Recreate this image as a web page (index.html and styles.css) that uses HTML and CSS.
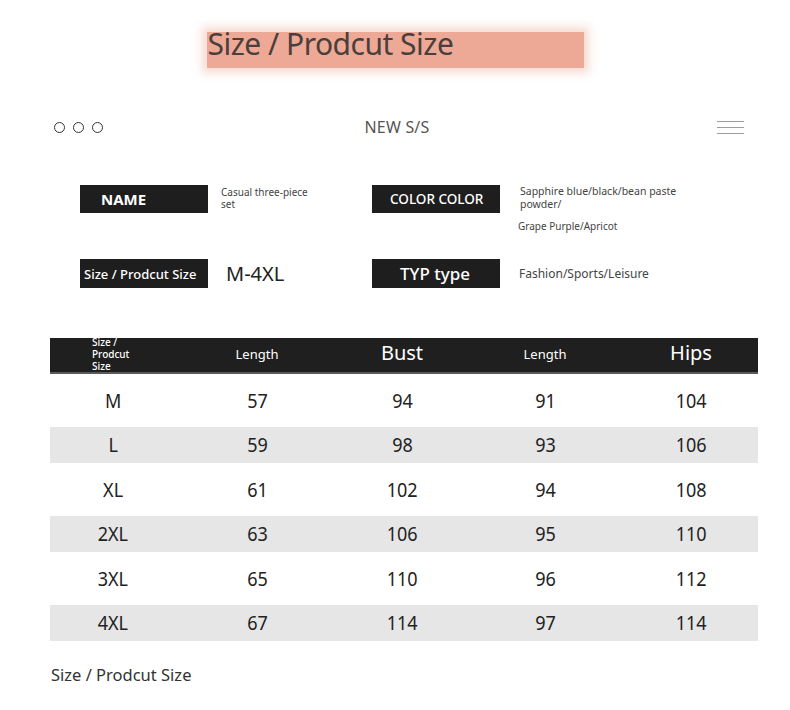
FILE: index.html
```html
<!DOCTYPE html>
<html lang="en">
<head>
<meta charset="utf-8">
<title>Size / Prodcut Size</title>
<link rel="stylesheet" href="styles.css">
</head>
<body>
<div class="page">
  <div class="title-wrap">
    <div class="title-band"><span class="title-text">Size / Prodcut Size</span></div>
  </div>

  <div class="topbar">
    <div class="dots"><span class="dot"></span><span class="dot"></span><span class="dot"></span></div>
    <div class="brand">NEW S/S</div>
    <div class="menu"><span></span><span></span><span></span></div>
  </div>

  <div class="info">
    <div class="info-row row-a">
      <div class="item item-left">
        <div class="label label-name">NAME</div>
        <div class="value value-small"><p>Casual three-piece</p><p>set</p></div>
      </div>
      <div class="item item-right">
        <div class="label label-color">COLOR COLOR</div>
        <div class="value value-color">
          <p>Sapphire blue/black/bean paste</p>
          <p>powder/</p>
          <p class="grape">Grape Purple/Apricot</p>
        </div>
      </div>
    </div>
    <div class="info-row row-b">
      <div class="item item-left">
        <div class="label label-size">Size / Prodcut Size</div>
        <div class="value value-big">M-4XL</div>
      </div>
      <div class="item item-right">
        <div class="label label-typ">TYP type</div>
        <div class="value value-type">Fashion/Sports/Leisure</div>
      </div>
    </div>
  </div>

  <div class="table">
    <div class="trow thead">
      <div class="cell cell-first"><span class="tiny">Size /<br>Prodcut<br>Size</span></div>
      <div class="cell"><span class="h-sm">Length</span></div>
      <div class="cell"><span class="h-lg">Bust</span></div>
      <div class="cell"><span class="h-sm">Length</span></div>
      <div class="cell"><span class="h-lg">Hips</span></div>
    </div>
    <div class="trow"><div class="cell"><span>M</span></div><div class="cell"><span>57</span></div><div class="cell"><span>94</span></div><div class="cell"><span>91</span></div><div class="cell"><span>104</span></div></div>
    <div class="trow alt"><div class="cell"><span>L</span></div><div class="cell"><span>59</span></div><div class="cell"><span>98</span></div><div class="cell"><span>93</span></div><div class="cell"><span>106</span></div></div>
    <div class="trow"><div class="cell"><span>XL</span></div><div class="cell"><span>61</span></div><div class="cell"><span>102</span></div><div class="cell"><span>94</span></div><div class="cell"><span>108</span></div></div>
    <div class="trow alt"><div class="cell"><span>2XL</span></div><div class="cell"><span>63</span></div><div class="cell"><span>106</span></div><div class="cell"><span>95</span></div><div class="cell"><span>110</span></div></div>
    <div class="trow"><div class="cell"><span>3XL</span></div><div class="cell"><span>65</span></div><div class="cell"><span>110</span></div><div class="cell"><span>96</span></div><div class="cell"><span>112</span></div></div>
    <div class="trow alt"><div class="cell"><span>4XL</span></div><div class="cell"><span>67</span></div><div class="cell"><span>114</span></div><div class="cell"><span>97</span></div><div class="cell"><span>114</span></div></div>
  </div>

  <div class="caption">Size / Prodcut Size</div>
</div>
</body>
</html>
```

FILE: styles.css
```css
* { box-sizing: border-box; }
html, body { margin: 0; padding: 0; background: #ffffff; }
body {
  font-family: "Noto Sans", "Open Sans", "DejaVu Sans", sans-serif;
  color: #333;
  width: 790px;
  height: 710px;
  overflow: hidden;
}
.page { padding-top: 32px; }

/* Title */
.title-wrap { display: flex; justify-content: center; }
.title-band {
  width: 377px;
  height: 36px;
  background: #eda995;
  box-shadow: 0 0 8px 5px rgba(240, 185, 168, 0.5);
  padding-left: 1px;
}
.title-text {
  display: block;
  font-size: 30px;
  line-height: 24px;
  letter-spacing: -0.5px;
  color: #4a3f3c;
  white-space: nowrap;
}

/* Top bar */
.topbar {
  margin-top: 47px;
  height: 24px;
  display: grid;
  grid-template-columns: 1fr auto 1fr;
  align-items: center;
  padding: 0 46px 0 54px;
}
.dots { display: flex; gap: 8px; }
.dot {
  width: 11px; height: 11px;
  border: 1.3px solid #333;
  border-radius: 50%;
}
.brand {
  font-size: 16px;
  letter-spacing: 0.2px;
  color: #555;
  line-height: 24px;
  margin-left: -4px;
}
.menu {
  justify-self: end;
  width: 27px;
  display: flex;
  flex-direction: column;
  gap: 5px;
}
.menu span { display: block; height: 1px; background: #a8979f; }

/* Info */
.info { margin-top: 46px; padding-left: 80px; }
.info-row { display: flex; }
.row-a { height: 74px; align-items: flex-start; }
.row-b { height: 29px; align-items: center; }
.item { display: flex; }
.item-left { width: 292px; }
.row-b .item { align-items: center; }
.label {
  width: 128px;
  height: 28px;
  background: #1e1e1e;
  color: #fff;
  display: flex;
  align-items: center;
  white-space: nowrap;
}
.row-b .label { height: 29px; }
.label-name { font-size: 15px; font-weight: 700; padding-left: 21px; }
.label-color { font-size: 13.5px; font-weight: 500; padding-left: 18px; }
.label-size { font-size: 13px; font-weight: 500; padding-left: 4px; }
.label-typ { font-size: 17px; font-weight: 500; padding-left: 28px; }

.value { color: #444; }
.value p { margin: 0; white-space: nowrap; }
.item-left .value { margin-left: 13px; }
.item-right .value { margin-left: 20px; }
.value-small { font-size: 10px; line-height: 12px; margin-top: 1px; }
.value-color { font-size: 10.5px; line-height: 13px; }
.value-color .grape { margin-top: 9px; margin-left: -2px; font-size: 10px; }
.item-left .value-big { font-size: 20px; color: #222; margin-left: 18px; }
.item-right .value-type { font-size: 12px; margin-left: 19px; }

/* Table */
.table {
  margin: 50px 0 0 50px;
  width: 708px;
  display: flex;
  flex-direction: column;
  gap: 8.5px;
}
.trow {
  display: grid;
  grid-template-columns: 126px 162px 128px 158px 134px;
  grid-template-rows: minmax(0, 1fr);
  height: 36px;
  align-items: center;
}
.trow.alt { background: #e6e6e6; }
.thead {
  background: #1f1f1f;
  border-bottom: 2px solid #5a5a5a;
  padding-bottom: 4px;
  color: #fff;
}
.cell {
  text-align: center;
  font-size: 20px;
  color: #222;
  line-height: 24px;
}
.cell span { display: inline-block; transform: scaleX(0.9); }
.thead .cell { color: #fff; }
.thead .cell span { transform: none; }
.h-sm { font-size: 13px; }
.h-lg { font-size: 20px; }
.cell-first { text-align: left; padding-left: 42px; }
.cell-first .tiny {
  font-size: 10px;
  line-height: 12px;
  font-weight: 500;
  margin-top: 4px;
}

.caption {
  margin: 23px 0 0 51px;
  font-size: 16.5px;
  line-height: 22px;
  color: #333;
}
```
